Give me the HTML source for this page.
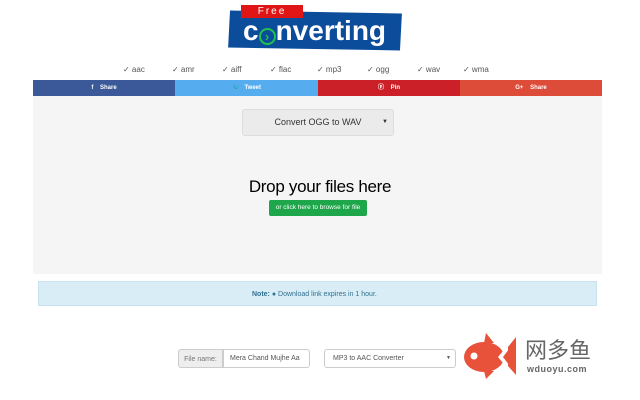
<!DOCTYPE html>
<html><head><style>
body{margin:0;width:640px;height:400px;background:#fff;font-family:"Liberation Sans",sans-serif;position:relative;overflow:hidden}
.a{position:absolute}
.fmt{top:65px;font-size:8px;color:#555}
.sh{top:80px;height:16px;color:#fff;font-size:6px;font-weight:bold;line-height:16px;text-align:center}
</style></head><body>
<div class="a" style="left:229px;top:12px;width:172px;height:37px;background:#0b4c9b;transform:skewX(-2deg) rotate(1deg)"></div>
<div class="a" style="left:241px;top:5px;width:62px;height:13px;background:#e01515;color:#fff;font-size:10px;text-align:center;line-height:13px;letter-spacing:2px">Free</div>
<div class="a" style="left:243px;top:15px;color:#fff;font-size:28px;font-weight:bold;letter-spacing:0">c<span style="display:inline-block;width:17px;height:17px;border:2px solid #22c24a;border-radius:50%;vertical-align:-1px;line-height:13px;font-size:13px;text-align:center;color:#22c24a;box-sizing:border-box">&#x203A;</span>nverting</div>
<div class="a fmt" style="left:123px">✓ aac</div>
<div class="a fmt" style="left:172px">✓ amr</div>
<div class="a fmt" style="left:222px">✓ aiff</div>
<div class="a fmt" style="left:270px">✓ flac</div>
<div class="a fmt" style="left:317px">✓ mp3</div>
<div class="a fmt" style="left:367px">✓ ogg</div>
<div class="a fmt" style="left:417px">✓ wav</div>
<div class="a fmt" style="left:463px">✓ wma</div>
<div class="a sh" style="left:33px;width:142px;background:#3b5998">f &nbsp;&nbsp; Share</div>
<div class="a sh" style="left:175px;width:143px;background:#55acee">🐦 &nbsp; Tweet</div>
<div class="a sh" style="left:318px;width:142px;background:#cb2027">ⓟ &nbsp;&nbsp; Pin</div>
<div class="a sh" style="left:460px;width:142px;background:#dd4b39">G+ &nbsp;&nbsp; Share</div>
<div class="a" style="left:33px;top:96px;width:569px;height:178px;background:#f5f5f5"></div>
<div class="a" style="left:242px;top:109px;width:150px;height:25px;background:#ebebeb;border:1px solid #ddd;border-radius:3px;font-size:9px;color:#333;text-align:center;line-height:25px">Convert OGG to WAV<span style="position:absolute;right:5px;font-size:6px">▼</span></div>
<div class="a" style="left:230px;top:177px;width:180px;text-align:center;font-size:17px;color:#000;letter-spacing:-0.3px">Drop your files here</div>
<div class="a" style="left:269px;top:200px;width:98px;height:16px;background:#1ea64a;border-radius:2px;color:#fff;font-size:6.5px;line-height:16px;text-align:center">or click here to browse for file</div>
<div class="a" style="left:38px;top:281px;width:559px;height:25px;background:#d9edf7;border:1px solid #c9e2ef;font-size:7px;line-height:25px;color:#31708f;box-sizing:border-box"><span style="position:absolute;left:213px"><b>Note:</b> ● Download link expires in 1 hour.</span></div>
<div class="a" style="left:178px;top:349px;width:45px;height:19px;background:#eee;border:1px solid #ccc;border-radius:3px 0 0 3px;font-size:7px;color:#777;line-height:19px;text-align:center;box-sizing:border-box">File name:</div>
<div class="a" style="left:223px;top:349px;width:87px;height:19px;border:1px solid #ccc;font-size:7px;color:#555;line-height:17px;padding-left:6px;box-sizing:border-box;border-radius:0 3px 3px 0">Mera Chand Mujhe Aa</div>
<div class="a" style="left:324px;top:349px;width:132px;height:19px;border:1px solid #ccc;border-radius:3px;font-size:7px;color:#555;line-height:17px;padding-left:8px;box-sizing:border-box">MP3 to AAC Converter<span style="position:absolute;right:4px;font-size:5px">▼</span></div>
<svg class="a" style="left:462px;top:331px" width="56" height="50" viewBox="0 0 56 50"><ellipse cx="22" cy="26" rx="20" ry="15" fill="#e8523a"/><path d="M24 2 L32 12 L22 12Z M24 48 L32 40 L22 40Z" fill="#e8523a"/><path d="M38 26 L54 6 L54 44Z" fill="#e8523a"/><path d="M36 26 L46 14 L46 38Z" fill="#fff"/><path d="M41 26 L54 9 L54 43Z" fill="#e8523a"/><circle cx="12" cy="25" r="3.5" fill="#fff"/></svg>
<div class="a" style="left:525px;top:336px;font-size:22px;color:#666;font-family:'Noto Sans CJK SC',sans-serif;line-height:26px">网多鱼</div>
<div class="a" style="left:527px;top:364px;font-size:9px;color:#666;font-weight:bold;letter-spacing:0.5px">wduoyu.com</div>
</body></html>
